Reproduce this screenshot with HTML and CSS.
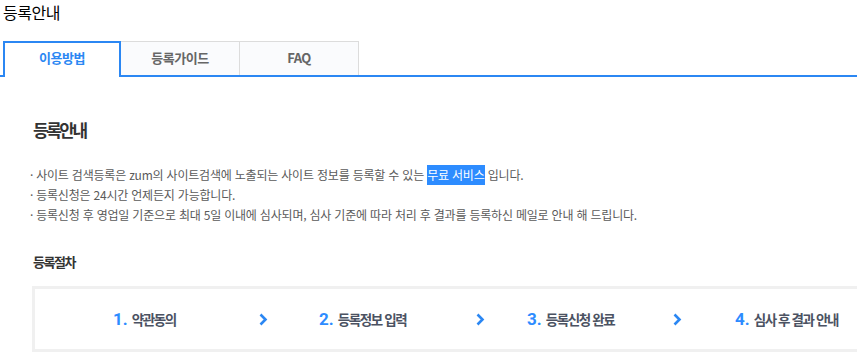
FILE: index.html
```html
<!DOCTYPE html>
<html lang="ko">
<head>
<meta charset="utf-8">
<title>등록안내</title>
<link rel="stylesheet" href="styles.css">
</head>
<body>
<h1 class="page-title">등록안내</h1>
<div class="tabs">
  <div class="tab active">이용방법</div>
  <div class="tab">등록가이드</div>
  <div class="tab">FAQ</div>
</div>
<div class="content">
  <h2 class="heading">등록안내</h2>
  <ul class="notes">
    <li>사이트 검색등록은 zum의 사이트검색에 노출되는 사이트 정보를 등록할 수 있는 <span class="hl">무료 서비스</span> 입니다.</li>
    <li>등록신청은 24시간 언제든지 가능합니다.</li>
    <li>등록신청 후 영업일 기준으로 최대 5일 이내에 심사되며, 심사 기준에 따라 처리 후 결과를 등록하신 메일로 안내 해 드립니다.</li>
  </ul>
  <h3 class="subheading">등록절차</h3>
  <div class="steps">
    <div class="step"><span class="num">1.</span>약관동의</div>
    <div class="arrow"><svg width="9" height="13" viewBox="0 0 9 13"><path d="M1.5 1.5 L6.5 6.5 L1.5 11.5" fill="none" stroke="#2b87f3" stroke-width="2.6"/></svg></div>
    <div class="step"><span class="num">2.</span>등록정보 입력</div>
    <div class="arrow"><svg width="9" height="13" viewBox="0 0 9 13"><path d="M1.5 1.5 L6.5 6.5 L1.5 11.5" fill="none" stroke="#2b87f3" stroke-width="2.6"/></svg></div>
    <div class="step"><span class="num">3.</span>등록신청 완료</div>
    <div class="arrow"><svg width="9" height="13" viewBox="0 0 9 13"><path d="M1.5 1.5 L6.5 6.5 L1.5 11.5" fill="none" stroke="#2b87f3" stroke-width="2.6"/></svg></div>
    <div class="step"><span class="num">4.</span>심사 후 결과 안내</div>
  </div>
</div>
</body>
</html>
```
FILE: styles.css
```css
html, body {
  margin: 0;
  padding: 0;
  overflow: hidden;
  background: #fff;
}
body {
  font-family: "Noto Sans CJK KR", "Noto Sans", sans-serif;
  color: #000;
}
.page-title {
  margin: 0;
  padding-left: 3px;
  font-size: 16px;
  font-weight: normal;
  line-height: 24px;
  letter-spacing: -0.5px;
  height: 24px;
}
.tabs {
  margin-top: 17px;
  display: flex;
  padding-left: 3px;
  border-bottom: 2px solid #2b87f3;
  height: 34px;
}
.tab {
  box-sizing: border-box;
  width: 119px;
  height: 34px;
  border-top: 1px solid #dcdcdc;
  border-right: 1px solid #dcdcdc;
  background: #fafbfd;
  color: #666;
  font-size: 13px;
  font-weight: bold;
  text-align: center;
  line-height: 32px;
  letter-spacing: -0.5px;
}
.tab.active {
  width: 118px;
  height: 36px;
  border: 2px solid #2b87f3;
  border-bottom: 0;
  background: #fff;
  color: #2b87f3;
  line-height: 30px;
}
.content {
  padding: 41px 0 0 33px;
}
.heading {
  margin: 0;
  font-size: 17px;
  font-weight: bold;
  color: #333;
  line-height: 24px;
  letter-spacing: -2.5px;
}
.notes {
  list-style: none;
  margin: 23px 0 0 -3px;
  padding: 0;
  font-size: 12px;
  line-height: 20px;
  color: #5a5a5a;
  letter-spacing: -0.2px;
}
.notes li::before {
  content: "·";
  margin-right: 3px;
}
.hl {
  background: #2d8cff;
  color: #fff;
  display: inline-block;
  line-height: 20px;
}
.subheading {
  margin: 27px 0 0 0;
  font-size: 13px;
  font-weight: bold;
  color: #333;
  line-height: 20px;
  letter-spacing: -1.5px;
}
.steps {
  box-sizing: border-box;
  margin: 14px 0 0 -1px;
  width: 860px;
  height: 66px;
  border: 3px solid #f0f0f0;
  display: grid;
  grid-template-columns: 146px 60px 157px 51px 146px 62px auto;
  align-items: center;
  padding-left: 78px;
}
.step {
  font-size: 13.5px;
  font-weight: bold;
  color: #4b5262;
  letter-spacing: -1.4px;
  white-space: nowrap;
  line-height: 20px;
}
.num {
  font-family: Roboto, "Noto Sans", sans-serif;
  font-size: 17px;
  font-weight: bold;
  color: #2d8cff;
  letter-spacing: 0;
  margin-right: 4px;
}
.arrow {
  display: flex;
  align-items: center;
  height: 20px;
}
```
